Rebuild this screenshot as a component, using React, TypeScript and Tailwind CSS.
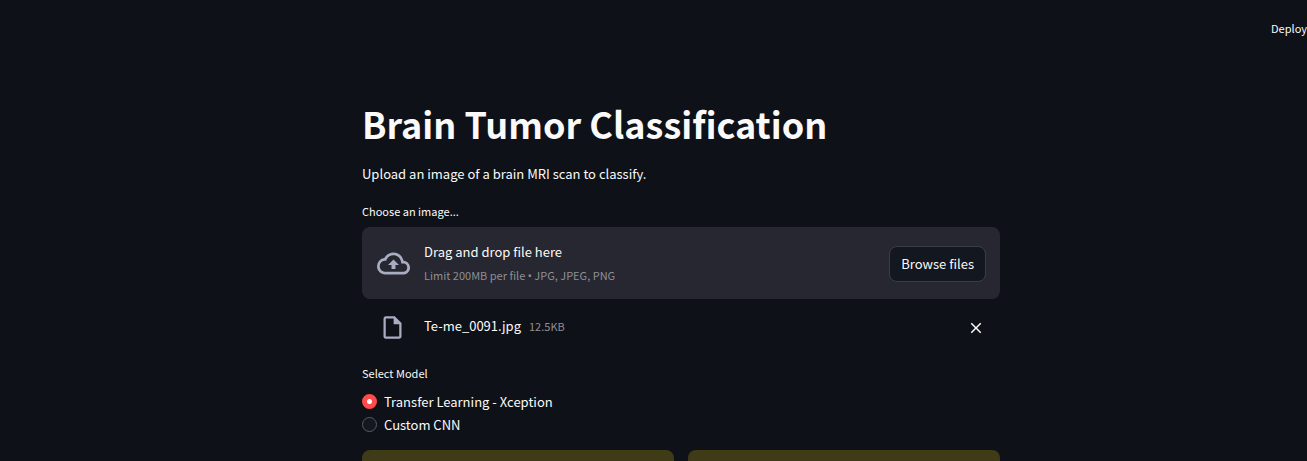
import { useState } from "react";

const models = ["Transfer Learning - Xception", "Custom CNN"];

function CloudUploadIcon() {
  return (
    <svg viewBox="0 0 24 24" className="size-[33px] shrink-0 fill-[#a9adc1]" aria-hidden="true">
      <path d="M19.35 10.04A7.49 7.49 0 0012 4C9.11 4 6.6 5.64 5.35 8.04A5.994 5.994 0 000 14c0 3.31 2.69 6 6 6h13c2.76 0 5-2.24 5-5 0-2.64-2.05-4.78-4.65-4.96zM19 18H6c-2.21 0-4-1.79-4-4 0-2.05 1.53-3.76 3.56-3.97l1.07-.11.5-.95A5.469 5.469 0 0112 6c2.62 0 4.88 1.86 5.39 4.43l.3 1.5 1.53.11A2.98 2.98 0 0122 15c0 1.65-1.35 3-3 3zM8 13h2.55v3h2.9v-3H16l-4-4z" />
    </svg>
  );
}

function FileIcon() {
  return (
    <svg viewBox="0 0 24 24" className="size-[27px] shrink-0 fill-[#a9adc1]" aria-hidden="true">
      <path d="M14 2H6c-1.1 0-1.99.9-1.99 2L4 20c0 1.1.89 2 1.99 2H18c1.1 0 2-.9 2-2V8l-6-6zM6 20V4h7v5h5v11H6z" />
    </svg>
  );
}

function CloseIcon() {
  return (
    <svg viewBox="0 0 24 24" className="size-[18px] fill-[#fafafa]" aria-hidden="true">
      <path d="M19 6.41L17.59 5 12 10.59 6.41 5 5 6.41 10.59 12 5 17.59 6.41 19 12 13.41 17.59 19 19 17.59 13.41 12 19 6.41z" />
    </svg>
  );
}

function FileUploader() {
  const [hasFile, setHasFile] = useState(true);
  return (
    <section aria-label="Choose an image...">
      <p className="text-[11px] leading-5">Choose an image...</p>
      <div className="mt-[6px] flex items-center rounded-lg bg-[#262730] pt-[13px] pr-[14px] pb-3 pl-[15px]">
        <CloudUploadIcon />
        <div className="ml-[14px] grow">
          <p className="text-[13px] leading-6">Drag and drop file here</p>
          <p className="text-[11px] leading-[22px] text-[#8f8f94]">
            Limit 200MB per file <span className="font-['Noto_Sans',sans-serif]">•</span> JPG, JPEG, PNG
          </p>
        </div>
        <button
          type="button"
          className="h-9 rounded-lg border border-[#3b3d45] bg-[#131720] px-[11px] text-[13px] leading-6"
        >
          Browse files
        </button>
      </div>
      {hasFile && (
        <div className="mt-[15px] flex items-center pr-[15px] pl-[17px]">
          <FileIcon />
          <div className="ml-[18px] flex grow gap-2 pb-[3px] leading-6">
            <p className="text-[13px]">Te-me_0091.jpg</p>
            <p className="text-[11px] text-[#8f8f94]">12.5KB</p>
          </div>
          <button type="button" aria-label="Remove file" onClick={() => setHasFile(false)}>
            <CloseIcon />
          </button>
        </div>
      )}
    </section>
  );
}

function ModelPicker() {
  const [model, setModel] = useState(models[0]);
  return (
    <fieldset className="mt-[22px]">
      <legend className="text-[11px] leading-5">Select Model</legend>
      <div className="mt-[7px]">
        {models.map((name) => (
          <label key={name} className="flex items-center gap-[7px] text-[13px] leading-[23px]">
            <input
              type="radio"
              name="model"
              value={name}
              checked={model === name}
              onChange={() => setModel(name)}
              className="size-[15px] appearance-none rounded-full border border-[#5a5b61] bg-[#131720] checked:border-5 checked:border-[#ff4b4b] checked:bg-white"
            />
            {name}
          </label>
        ))}
      </div>
    </fieldset>
  );
}

export default function App() {
  return (
    <div className="h-screen overflow-hidden bg-[#0e1117] font-['Noto_Sans_CJK_SC','Noto_Sans',sans-serif] text-[#fafafa]">
      <header className="flex h-14 items-center justify-end">
        <button type="button" className="text-[11px] leading-5">
          Deploy
        </button>
      </header>
      <div className="pl-[55px]">
        <main className="mx-auto max-w-[638px]">
          <h1 className="pt-[43px] text-[36px] leading-12 font-bold">Brain Tumor Classification</h1>
          <p className="mt-[15px] text-[13px] leading-6">
            Upload an image of a brain MRI scan to classify.
          </p>
          <div className="mt-[15px]">
            <FileUploader />
          </div>
          <ModelPicker />
          <div className="mt-[14px] grid grid-cols-2 gap-[14px]">
            <div className="h-14 rounded-lg bg-[#3e3b16]" />
            <div className="h-14 rounded-lg bg-[#3e3b16]" />
          </div>
        </main>
      </div>
    </div>
  );
}
